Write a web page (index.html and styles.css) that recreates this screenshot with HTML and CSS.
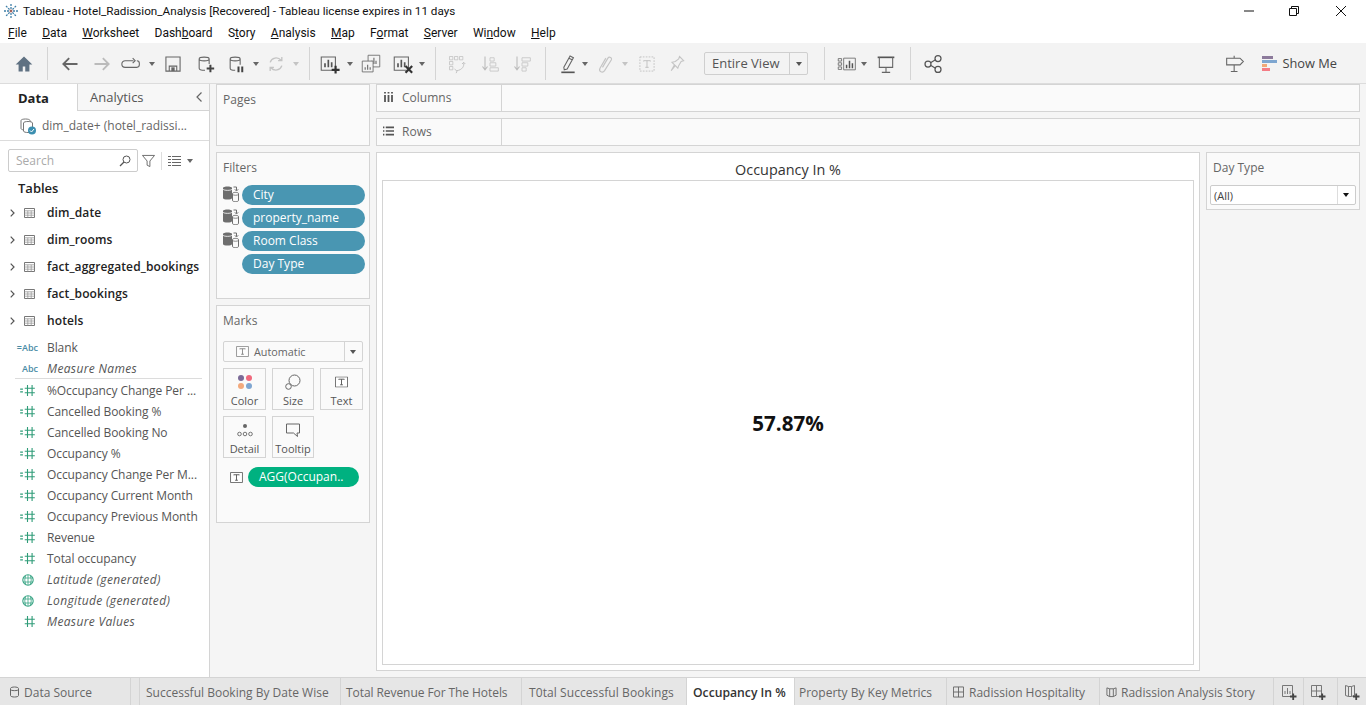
FILE: index.html
```html
<!DOCTYPE html>
<html lang="en">
<head>
  <meta charset="UTF-8">
  <meta name="viewport" content="width=device-width, initial-scale=1.0">
  <title>Tableau - Hotel_Radission_Analysis</title>
  <link rel="stylesheet" href="styles.css">
</head>
<body>
  <svg class="sprite" xmlns="http://www.w3.org/2000/svg">
    <symbol id="hash" viewBox="0 0 16 12">
      <path d="M0 4.500h3M0 7.500h3M5 3.500h11M5 8.500h11M8 0v12M13 0v12" fill="none" stroke="#2f9c78" stroke-width="1.200"/>
    </symbol>
    <symbol id="hash-plain" viewBox="0 0 16 12">
      <path d="M5 3.500h11M5 8.500h11M8 0v12M13 0v12" fill="none" stroke="#2f9c78" stroke-width="1.200"/>
    </symbol>
    <symbol id="globe" viewBox="0 0 12 12">
      <circle cx="6" cy="6" r="5.200" fill="none" stroke="#3aa585" stroke-width="1.100"/>
      <path d="M1 4h10M1 8h10M6 1v10M3.500 2q-1.500 4 0 8M8.500 2q1.500 4 0 8" fill="none" stroke="#3aa585" stroke-width=".8"/>
    </symbol>
    <symbol id="table" viewBox="0 0 11 10">
      <path d="M.5.500h10v9H.5z" fill="#fff" stroke="#777"/>
      <path d="M.5 2.800h10M.5 5h10M.5 7.200h10M3.800 2.800v6.700M7.200 2.800v6.700" stroke="#999" fill="none" stroke-width=".8"/>
    </symbol>
    <symbol id="dblink" viewBox="0 0 16 16">
      <path d="M0 2C0 0 9 0 9 2v10c0 2-9 2-9 0z" fill="#6e6e6e"/>
      <path d="M0 3c0 1.800 9 1.800 9 0" fill="none" stroke="#fff" stroke-width=".8"/>
      <path d="M9.500 7.500c0-1.500 6-1.500 6 0v7c0 1.500-6 1.500-6 0z" fill="#fafafa" stroke="#6e6e6e"/>
      <path d="M9.500 8.500c1 1 5 1 6 0" fill="none" stroke="#6e6e6e" stroke-width=".8"/>
      <path d="M10.500 1h3v3.500M11.800 3.300l1.700 1.700 1.700-1.700" fill="none" stroke="#6e6e6e"/>
    </symbol>
    <symbol id="tbox" viewBox="0 0 14 12">
      <path d="M.5.500h13v11H.5z" fill="#fff" stroke="#666"/>
      <path d="M4 3.500V3h6v.5M7 3v6M5.500 9h3" fill="none" stroke="#555"/>
    </symbol>
    <symbol id="chev" viewBox="0 0 5 8">
      <path d="M.7.700L4 4 .7 7.300" fill="none" stroke="#555" stroke-width="1.200"/>
    </symbol>
  </svg>

  <div class="titlebar">
    <svg class="logo" viewBox="0 0 16 16">
      <path d="M8 1v14M1 8h14M3 3l10 10M13 3L3 13" stroke="#3f7fa8" stroke-width="1.300" stroke-dasharray="2 1"/>
      <path d="M6.500 8h3M8 6.500v3" stroke="#c0553f"/>
    </svg>
    <span class="title-text">Tableau - Hotel_Radission_Analysis [Recovered] - Tableau license expires in 11 days</span>
    <div class="win-controls">
      <svg class="win-min" viewBox="0 0 10 10"><path d="M0 5h10" stroke="#111"/></svg>
      <svg class="win-max" viewBox="0 0 10 10"><path d="M.5 2.500h7v7h-7zM2.500 2.500v-2h7v7h-2" fill="none" stroke="#111"/></svg>
      <svg class="win-close" viewBox="0 0 12 12"><path d="M1 1l10 10M11 1L1 11" stroke="#111"/></svg>
    </div>
  </div>

  <nav class="menubar">
    <span><u>F</u>ile</span>
    <span><u>D</u>ata</span>
    <span><u>W</u>orksheet</span>
    <span>Dash<u>b</u>oard</span>
    <span>S<u>t</u>ory</span>
    <span><u>A</u>nalysis</span>
    <span><u>M</u>ap</span>
    <span>F<u>o</u>rmat</span>
    <span><u>S</u>erver</span>
    <span>Wi<u>n</u>dow</span>
    <span><u>H</u>elp</span>
  </nav>

  <div class="toolbar">
    <svg class="tool" viewBox="0 0 24 24"><path d="M12 3L2 12.500h3.500V21h5v-6h3v6h5v-8.500H22z" fill="#5f7182"/></svg>
    <i class="sep g11"></i>
    <svg class="tool g10" viewBox="0 0 24 24"><path d="M21 12H5M11 5l-7 7 7 7" fill="none" stroke="#666" stroke-width="2.200"/></svg>
    <svg class="tool g8" viewBox="0 0 24 24"><path d="M3 12h16M13 5l7 7-7 7" fill="none" stroke="#bbb" stroke-width="2.200"/></svg>
    <svg class="tool g5" viewBox="0 0 24 24"><path d="M15 8H5a3 3 0 0 0 0 8h14a3 3 0 0 0 3-3v-2a3 3 0 0 0-3-3M14 5l3 3-3 3" fill="none" stroke="#666" stroke-width="1.300"/></svg>
    <i class="caret g2"></i>
    <svg class="tool g2" viewBox="0 0 24 24"><path d="M3.500 3.500h17v17h-17zM7.500 20.500v-6h9v6" fill="none" stroke="#666" stroke-width="1.300"/><path d="M10 16h4v4.500h-4z" fill="#666"/></svg>
    <svg class="tool g8" viewBox="0 0 24 24"><path d="M5 6c0-3 12-3 12 0v6M5 6v11c0 1.500 3 2.500 7 2.500M5 6c0 3 12 3 12 0" fill="none" stroke="#666" stroke-width="1.300"/><path d="M14 17.500h9M18.500 13v9" stroke="#444" stroke-width="2.400"/></svg>
    <svg class="tool g7" viewBox="0 0 24 24"><path d="M5 6c0-3 12-3 12 0v7M5 6v11c0 1.500 3 2.500 6 2.500M5 6c0 3 12 3 12 0" fill="none" stroke="#666" stroke-width="1.300"/><path d="M15 15v7M19.500 15v7" stroke="#444" stroke-width="2.400"/></svg>
    <i class="caret g1"></i>
    <svg class="tool g1" viewBox="0 0 24 24"><path d="M5 10a7.500 7.500 0 0 1 13-2.500M19 14a7.500 7.500 0 0 1-13 2.500M19 3.500V8h-4.500M5 20.500V16h4.500" fill="none" stroke="#c4c4c4" stroke-width="1.600"/></svg>
    <i class="caret g1 off"></i>
    <i class="sep g6"></i>
    <svg class="tool g8" viewBox="0 0 24 24"><path d="M1.500 3.500h17v16h-17z" fill="none" stroke="#666" stroke-width="1.300"/><path d="M6 16v-5M10 16V7M14 16v-6" stroke="#555" stroke-width="2"/><path d="M14 19h9.500M18.700 14v9.500" stroke="#333" stroke-width="2.600"/></svg>
    <i class="caret g1"></i>
    <svg class="tool g2" viewBox="0 0 24 24"><path d="M8.500 1.500h14v14h-14z" fill="#f3f3f3" stroke="#666"/><path d="M13 12V8M15.500 12V4.500M18 12V8" stroke="#666" stroke-width="1.300"/><path d="M1.500 8.500h13v13h-13z" fill="#f3f3f3" stroke="#666"/><path d="M5 19v-3M8 19v-6M11 19v-3" stroke="#666" stroke-width="1.300"/></svg>
    <svg class="tool g8" viewBox="0 0 24 24"><path d="M1.500 3.500h17v16h-17z" fill="none" stroke="#666" stroke-width="1.300"/><path d="M6 16v-5M10 16V7M14 16v-6" stroke="#555" stroke-width="2"/><path d="M15 14.500l8 8M23 14.500l-8 8" stroke="#333" stroke-width="2.600"/></svg>
    <i class="caret"></i>
    <i class="sep g6"></i>
    <svg class="tool g9" viewBox="0 0 24 24"><path d="M3 3h4v4H3zM9 3h4v4H9zM15 3h4v4h-4zM3 9h4v4H3zM3 15h4v4H3z" fill="none" stroke="#c4c4c4"/><path d="M20 10c1 5-2 9-8 10M9 18l3 2.500-1 2.500M18 12l2-2 2 2" fill="none" stroke="#c4c4c4" stroke-width="1.200"/></svg>
    <svg class="tool g9" viewBox="0 0 24 24"><path d="M6 3v15M3 15l3 4 3-4" fill="none" stroke="#bbb" stroke-width="1.300"/><path d="M12 4.500h5v4h-5zM12 10.500h7v4h-7zM12 16.500h10v4H12z" fill="none" stroke="#c4c4c4"/></svg>
    <svg class="tool g8" viewBox="0 0 24 24"><path d="M6 3v15M3 15l3 4 3-4" fill="none" stroke="#bbb" stroke-width="1.300"/><path d="M12 4.500h10v4H12zM12 10.500h7v4h-7zM12 16.500h5v4h-5z" fill="none" stroke="#c4c4c4"/></svg>
    <i class="sep g11"></i>
    <svg class="tool g10" viewBox="0 0 24 24"><path d="M7 16L14.500 2.500l4 2L11 18l-3.500 1zM13 5l4 2" fill="none" stroke="#666" stroke-width="1.300"/><path d="M4 22h16" stroke="#555" stroke-width="2"/></svg>
    <i class="caret gm2"></i>
    <svg class="tool g1" viewBox="0 0 24 24"><path d="M9 16L15.500 5c1.500-2.500 5.500-.5 4 2.200L11.500 20c-2.500 3.500-7.500 1-5.500-3l7-12" fill="none" stroke="#c4c4c4" stroke-width="1.400"/></svg>
    <i class="caret g1 off"></i>
    <svg class="tool g3" viewBox="0 0 24 24"><path d="M3.500 3.500h17v17h-17z" fill="none" stroke="#bbb" stroke-dasharray="2 1.500"/><path d="M8 9V8h8v1M12 8v8M10 16h4" fill="none" stroke="#bbb"/></svg>
    <svg class="tool g6" viewBox="0 0 24 24"><path d="M15 3l5 5-3 1-3 5-1 3-3-3-5 6 4-7-3-3 4-1 4-3z" fill="none" stroke="#c4c4c4" stroke-width="1.300"/></svg>
    <div class="fit-select g15"><span class="fit-label">Entire View</span><span class="fit-arrow"><i class="caret dark"></i></span></div>
    <i class="sep g16"></i>
    <svg class="tool g10" viewBox="0 0 24 24"><path d="M1.500 5.500h4v3h-4zM1.500 10.500h4v3h-4zM1.500 15.500h4v3h-4zM8 5h14v14H8z" fill="none" stroke="#666"/><path d="M11.500 17v-4M15 17V8M18.500 17v-6" stroke="#555" stroke-width="1.800"/></svg>
    <i class="caret gm2"></i>
    <svg class="tool g3" viewBox="0 0 24 24"><path d="M2 4h20" stroke="#555" stroke-width="2"/><path d="M4 4v12h16V4M12 16v6M7 22h10" fill="none" stroke="#666" stroke-width="1.300"/></svg>
    <i class="sep g12"></i>
    <svg class="tool g10" viewBox="0 0 24 24"><circle cx="6" cy="12" r="3.600" fill="none" stroke="#555" stroke-width="1.500"/><circle cx="18" cy="5.500" r="3.600" fill="none" stroke="#555" stroke-width="1.500"/><circle cx="18" cy="18.500" r="3.600" fill="none" stroke="#555" stroke-width="1.500"/><path d="M9 10.500l6-3.500M9 13.500l6 3.500" stroke="#555" stroke-width="1.500"/></svg>
    <div class="toolbar-right">
      <svg class="tool" viewBox="0 0 24 24"><path d="M2 5h16l4 4-4 4H2zM11 5V2M11 13v8M7 21h8" fill="none" stroke="#666" stroke-width="1.300"/></svg>
      <div class="show-me">
        <div class="show-bars"><i class="bar-1"></i><i class="bar-2"></i><i class="bar-3"></i><i class="bar-4"></i></div>
        <span>Show Me</span>
      </div>
    </div>
  </div>

  <div class="main">
    <aside class="sidebar">
      <div class="side-tabs">
        <div class="side-tab active">Data</div>
        <div class="side-tab">Analytics<svg class="collapse" viewBox="0 0 8 12"><path d="M6.500 1.500L2 6l4.500 4.500" fill="none" stroke="#666" stroke-width="1.200"/></svg></div>
      </div>
      <div class="source">
        <svg class="source-icon" viewBox="0 0 18 18">
          <path d="M2 3.500c0-2 9-2 9 0v8c0 2-9 2-9 0z" fill="#fff" stroke="#777"/>
          <path d="M4.500 6c0-2 9-2 9 0v8c0 2-9 2-9 0z" fill="#fff" stroke="#777"/>
          <circle cx="13" cy="13.500" r="4" fill="#3c8fb0"/>
          <path d="M11 13.500l1.500 1.500 2.500-3" fill="none" stroke="#fff"/>
        </svg>
        <span>dim_date+ (hotel_radissi...</span>
      </div>
      <div class="search-row">
        <div class="search"><span>Search</span>
          <svg viewBox="0 0 12 12"><circle cx="7.500" cy="4.500" r="3.500" fill="none" stroke="#555"/><path d="M5 7l-4 4" stroke="#555" stroke-width="1.200"/></svg>
        </div>
        <svg class="funnel" viewBox="0 0 14 14"><path d="M.5 1h13L8.500 7v6l-3-1.500V7z" fill="none" stroke="#666"/></svg>
        <i class="search-sep"></i>
        <svg class="list-icon" viewBox="0 0 13 10"><path d="M0 .5h3M0 3.500h3M0 6.500h3M0 9.500h3M4 .5h9M4 3.500h9M4 6.500h9M4 9.500h9" stroke="#666"/></svg>
        <i class="caret"></i>
      </div>
      <div class="tables-label">Tables</div>
      <ul class="tables">
        <li><svg class="chev"><use href="#chev"/></svg><svg class="table-icon"><use href="#table"/></svg>dim_date</li>
        <li><svg class="chev"><use href="#chev"/></svg><svg class="table-icon"><use href="#table"/></svg>dim_rooms</li>
        <li><svg class="chev"><use href="#chev"/></svg><svg class="table-icon"><use href="#table"/></svg>fact_aggregated_bookings</li>
        <li><svg class="chev"><use href="#chev"/></svg><svg class="table-icon"><use href="#table"/></svg>fact_bookings</li>
        <li><svg class="chev"><use href="#chev"/></svg><svg class="table-icon"><use href="#table"/></svg>hotels</li>
      </ul>
      <ul class="fields dims">
        <li><span class="abc">=Abc</span>Blank</li>
        <li class="gen"><span class="abc">Abc</span>Measure Names</li>
      </ul>
      <ul class="fields">
        <li><span class="field-icon"><svg class="hash"><use href="#hash"/></svg></span>%Occupancy Change Per ...</li>
        <li><span class="field-icon"><svg class="hash"><use href="#hash"/></svg></span>Cancelled Booking %</li>
        <li><span class="field-icon"><svg class="hash"><use href="#hash"/></svg></span>Cancelled Booking No</li>
        <li><span class="field-icon"><svg class="hash"><use href="#hash"/></svg></span>Occupancy %</li>
        <li><span class="field-icon"><svg class="hash"><use href="#hash"/></svg></span>Occupancy Change Per M...</li>
        <li><span class="field-icon"><svg class="hash"><use href="#hash"/></svg></span>Occupancy Current Month</li>
        <li><span class="field-icon"><svg class="hash"><use href="#hash"/></svg></span>Occupancy Previous Month</li>
        <li><span class="field-icon"><svg class="hash"><use href="#hash"/></svg></span>Revenue</li>
        <li><span class="field-icon"><svg class="hash"><use href="#hash"/></svg></span>Total occupancy</li>
        <li class="gen"><span class="field-icon"><svg class="globe"><use href="#globe"/></svg></span>Latitude (generated)</li>
        <li class="gen"><span class="field-icon"><svg class="globe"><use href="#globe"/></svg></span>Longitude (generated)</li>
        <li class="gen"><span class="field-icon"><svg class="hash"><use href="#hash-plain"/></svg></span>Measure Values</li>
      </ul>
    </aside>

    <div class="cards">
      <section class="card pages"><h4>Pages</h4></section>
      <section class="card filters">
        <h4>Filters</h4>
        <div class="filter"><svg class="dblink"><use href="#dblink"/></svg><span class="pill">City</span></div>
        <div class="filter"><svg class="dblink"><use href="#dblink"/></svg><span class="pill">property_name</span></div>
        <div class="filter"><svg class="dblink"><use href="#dblink"/></svg><span class="pill">Room Class</span></div>
        <div class="filter"><span class="pill">Day Type</span></div>
      </section>
      <section class="card marks">
        <h4>Marks</h4>
        <div class="mark-select">
          <div class="mark-type"><svg class="mark-t"><use href="#tbox"/></svg>Automatic</div>
          <div class="mark-arrow"><i class="caret dark"></i></div>
        </div>
        <div class="mark-grid">
          <div class="mark-btn">
            <svg viewBox="0 0 16 16"><circle cx="4" cy="4" r="3" fill="#7b6a97"/><circle cx="12" cy="4" r="3" fill="#f0697d"/><circle cx="4" cy="12" r="3" fill="#f3a97c"/><circle cx="12" cy="12" r="3" fill="#7fa6d1"/></svg>
            <span>Color</span>
          </div>
          <div class="mark-btn">
            <svg viewBox="0 0 16 16"><circle cx="9.500" cy="6.500" r="5.500" fill="none" stroke="#666"/><circle cx="3.500" cy="12.500" r="2.800" fill="#fafafa" stroke="#666"/></svg>
            <span>Size</span>
          </div>
          <div class="mark-btn">
            <svg viewBox="0 0 14 12" class="mark-text-icon"><use href="#tbox"/></svg>
            <span>Text</span>
          </div>
          <div class="mark-btn">
            <svg viewBox="0 0 16 16"><circle cx="8" cy="4" r="2" fill="#666"/><circle cx="2.500" cy="12" r="1.800" fill="none" stroke="#666" stroke-width=".9"/><circle cx="8" cy="12" r="1.800" fill="none" stroke="#666" stroke-width=".9"/><circle cx="13.500" cy="12" r="1.800" fill="none" stroke="#666" stroke-width=".9"/></svg>
            <span>Detail</span>
          </div>
          <div class="mark-btn">
            <svg viewBox="0 0 16 16"><path d="M1.500 2h13v9H12l.5 3.500L8.500 11h-7z" fill="none" stroke="#666"/></svg>
            <span>Tooltip</span>
          </div>
        </div>
        <div class="mark-field"><svg class="mark-t"><use href="#tbox"/></svg><span class="pill green">AGG(Occupan..</span></div>
      </section>
    </div>

    <div class="workspace">
      <div class="shelf"><div class="shelf-label"><svg viewBox="0 0 10 10"><path d="M1.500 0v1.500M5 0v1.500M8.500 0v1.500M1.500 3v7M5 3v7M8.500 3v7" stroke="#555" stroke-width="1.800"/></svg>Columns</div></div>
      <div class="shelf"><div class="shelf-label"><svg viewBox="0 0 12 10"><path d="M0 1h1.500M3 1h9M0 5h1.500M3 5h9M0 9h1.500M3 9h9" stroke="#555" stroke-width="1.800"/></svg>Rows</div></div>
      <div class="canvas">
        <div class="sheet">
          <div class="sheet-title">Occupancy In %</div>
          <div class="view"><span class="kpi">57.87%</span></div>
        </div>
        <div class="legend">
          <h4>Day Type</h4>
          <div class="legend-select"><span>(All)</span><span class="legend-arrow"><i class="caret black"></i></span></div>
        </div>
      </div>
    </div>
  </div>

  <div class="tabbar">
    <div class="tab source-tab"><svg viewBox="0 0 10 12"><path d="M1 2.500c0-2 8-2 8 0v7c0 2-8 2-8 0zM1 3.500c0 1.500 8 1.500 8 0" fill="none" stroke="#666"/></svg>Data Source</div>
    <div class="tab-gap"></div>
    <div class="tab t1">Successful Booking By Date Wise</div>
    <div class="tab t2">Total Revenue For The Hotels</div>
    <div class="tab t3">T0tal Successful Bookings</div>
    <div class="tab t4 active">Occupancy In %</div>
    <div class="tab t5">Property By Key Metrics</div>
    <div class="tab t6"><svg viewBox="0 0 12 12"><path d="M.5.500h11v11H.5zM6 .5v11M.5 6h11" fill="none" stroke="#666"/></svg>Radission Hospitality</div>
    <div class="tab t7"><svg viewBox="0 0 12 12"><path d="M1 1.500l3 1h4l3-1v8l-3 1.500H4L1 9.500zM4 2.500V11M8 2.500V11" fill="none" stroke="#666"/></svg>Radission Analysis Story</div>
    <div class="tab add"><svg viewBox="0 0 16 16"><path d="M1.500 1.500h10v11h-10z" fill="none" stroke="#777"/><path d="M4 10V7M6.500 10V4M9 10V7" stroke="#777"/><path d="M9 12.500h6.500M12.200 9.500v6.500" stroke="#444" stroke-width="1.800"/></svg></div>
    <div class="tab add mid"><svg viewBox="0 0 16 16"><path d="M1.500 1.500h10v11h-10zM6.500 1.500v11M1.500 7h10" fill="none" stroke="#777"/><path d="M9 12.500h6.500M12.200 9.500v6.500" stroke="#444" stroke-width="1.800"/></svg></div>
    <div class="tab add end"><svg viewBox="0 0 16 16"><path d="M1.500 1.500l3 1h3l3-1v10l-3 1h-3l-3-1zM4.500 2.500v10M7.500 2.500v10" fill="none" stroke="#777"/><path d="M9 12.500h6.500M12.200 9.500v6.500" stroke="#444" stroke-width="1.800"/></svg></div>
  </div>
</body>
</html>
```

FILE: styles.css
```css
* {
  box-sizing: border-box;
}
html, body {
  height: 100%;
}
body {
  margin: 0;
  height: 705px;
  overflow: hidden;
  display: flex;
  flex-direction: column;
  background: #f5f5f5;
  color: #555;
  font-family: "Open Sans", "Noto Sans", sans-serif;
  font-size: 12px;
}
ul {
  list-style: none;
  margin: 0;
  padding: 0;
}
h4 {
  margin: 0;
  font-weight: 400;
  font-size: 12px;
  color: #666;
}
.sprite {
  display: none;
}

/* title + menu */
.titlebar {
  height: 22px;
  flex: none;
  display: flex;
  align-items: center;
  background: #fff;
  color: #111;
  padding-left: 3px;
}
.logo {
  width: 16px;
  height: 16px;
  margin-right: 4px;
}
.title-text {
  font-family: Roboto, sans-serif;
  font-size: 11.700px;
}
.win-controls {
  margin-left: auto;
  display: flex;
  align-items: center;
}
.win-min {
  width: 10px;
  height: 10px;
  margin-right: 35px;
}
.win-max {
  width: 10px;
  height: 10px;
  margin-right: 36px;
}
.win-close {
  width: 12px;
  height: 12px;
  margin-right: 19px;
}
.menubar {
  height: 21px;
  flex: none;
  display: flex;
  align-items: center;
  gap: 15.300px;
  padding-left: 8px;
  background: #fff;
  color: #111;
  font-family: Roboto, sans-serif;
  font-size: 12px;
}

/* toolbar */
.toolbar {
  height: 41px;
  flex: none;
  display: flex;
  align-items: center;
  padding: 1px 0 0 12px;
  background: #f3f3f3;
  border-bottom: 1px solid #dcdcdc;
}
.tool {
  width: 24px;
  height: 24px;
  padding: 2px;
  flex: none;
}
.sep {
  width: 1px;
  height: 33px;
  background: #d4d4d4;
  flex: none;
}
.caret {
  width: 14px;
  height: 4px;
  flex: none;
  position: relative;
  display: block;
}
.caret::after {
  content: "";
  position: absolute;
  left: 4px;
  top: 0;
  border-left: 3px solid transparent;
  border-right: 3px solid transparent;
  border-top: 4px solid #666;
}
.caret.off::after {
  border-top-color: #c4c4c4;
}
.caret.dark::after {
  border-top-color: #555;
}
.caret.black::after {
  border-top-color: #111;
}
.gm2 { margin-left: -2px; }
.g1 { margin-left: 1px; }
.g2 { margin-left: 2px; }
.g3 { margin-left: 3px; }
.g5 { margin-left: 5px; }
.g6 { margin-left: 6px; }
.g7 { margin-left: 7px; }
.g8 { margin-left: 8px; }
.g9 { margin-left: 9px; }
.g10 { margin-left: 10px; }
.g11 { margin-left: 11px; }
.g12 { margin-left: 12px; }
.g15 { margin-left: 15px; }
.g16 { margin-left: 16px; }
.fit-select {
  width: 104px;
  height: 23px;
  display: flex;
  align-items: center;
  border: 1px solid #cfcfcf;
  border-radius: 2px;
  font-size: 13px;
  color: #555;
}
.fit-label {
  flex: 1;
  padding: 0 0 2px 7px;
}
.fit-arrow {
  width: 18px;
  height: 100%;
  display: flex;
  align-items: center;
  border-left: 1px solid #cfcfcf;
  padding-left: 2px;
}
.toolbar-right {
  margin-left: auto;
  display: flex;
  align-items: center;
  padding-right: 29px;
}
.show-me {
  display: flex;
  align-items: center;
  gap: 6px;
  margin-left: 15px;
  font-size: 12.800px;
  color: #444;
}
.show-me span {
  padding-bottom: 2px;
}
.show-bars {
  width: 15px;
  display: flex;
  flex-direction: column;
  gap: 1px;
}
.show-bars i {
  height: 3px;
  display: block;
}
.bar-1 { width: 11px; background: #8c7a9b; }
.bar-2 { width: 15px; background: #7ea6d0; }
.bar-3 { width: 5px; background: #f0a878; }
.bar-4 { width: 8px; background: #f47c85; }

/* main area */
.main {
  flex: 1;
  min-height: 0;
  display: flex;
}
.sidebar {
  width: 210px;
  flex: none;
  background: #fff;
  border-right: 1px solid #d4d4d4;
}
.side-tabs {
  height: 27px;
  display: flex;
}
.side-tab {
  display: flex;
  align-items: center;
  flex: 1;
  padding-left: 12px;
  font-size: 13px;
  color: #555;
  background: #f7f7f7;
  border-left: 1px solid #d4d4d4;
  border-bottom: 1px solid #d4d4d4;
}
.side-tab.active {
  flex: none;
  width: 77px;
  padding-left: 18px;
  font-weight: 700;
  color: #222;
  background: #fff;
  border: 0;
}
.collapse {
  width: 8px;
  height: 12px;
  margin-left: auto;
  margin-right: 6px;
}
.source {
  height: 30px;
  display: flex;
  align-items: center;
  padding-left: 19px;
  border-bottom: 1px solid #dcdcdc;
  color: #666;
}
.source-icon {
  width: 18px;
  height: 18px;
  margin-right: 5px;
}
.search-row {
  display: flex;
  align-items: center;
  margin-top: 8px;
  padding-left: 8px;
}
.search {
  width: 130px;
  height: 23px;
  display: flex;
  align-items: center;
  justify-content: space-between;
  padding: 0 6px 0 7px;
  border: 1px solid #ccc;
  border-radius: 2px;
  color: #aaa;
}
.search svg {
  width: 12px;
  height: 12px;
}
.funnel {
  width: 13px;
  height: 14px;
  margin-left: 4px;
}
.search-sep {
  width: 1px;
  height: 18px;
  margin-left: 6px;
  background: #ddd;
}
.list-icon {
  width: 13px;
  height: 10px;
  margin-left: 6px;
}
.search-row .caret {
  margin-left: 2px;
}
.tables-label {
  height: 20px;
  line-height: 20px;
  margin-top: 6px;
  padding-left: 18px;
  font-size: 13px;
  font-weight: 600;
  color: #222;
}
.tables {
  margin-top: 1px;
}
.tables li {
  height: 27px;
  display: flex;
  align-items: center;
  padding-left: 10px;
  font-weight: 600;
  letter-spacing: .1px;
  color: #222;
}
.chev {
  width: 5px;
  height: 8px;
  margin-right: 9px;
}
.table-icon {
  width: 11px;
  height: 10px;
  margin-right: 12px;
}
.dims {
  margin-top: 3px;
}
.dims li:last-child {
  border-bottom: 1px solid #dcdcdc;
}
.fields {
  margin-left: 15px;
  margin-right: 7px;
}
.fields li {
  height: 21px;
  display: flex;
  align-items: center;
  white-space: nowrap;
  letter-spacing: -.08px;
  color: #555;
}
.fields li.gen {
  font-style: italic;
  letter-spacing: .35px;
}
.dims + .fields {
  margin-top: 1px;
}
.field-icon {
  width: 32px;
  flex: none;
  display: flex;
  align-items: center;
  padding-left: 5px;
}
.abc {
  width: 32px;
  flex: none;
  font-size: 9px;
  font-style: normal;
  font-weight: 600;
  letter-spacing: 0;
  color: #4b8ca6;
  text-align: right;
  padding-right: 9px;
}
.hash {
  width: 15px;
  height: 11px;
}
.globe {
  width: 12px;
  height: 12px;
  margin-left: 2px;
}

/* pages / filters / marks */
.cards {
  width: 154px;
  flex: none;
  margin-left: 6px;
  display: flex;
  flex-direction: column;
  gap: 6px;
}
.card {
  background: #fafafa;
  border: 1px solid #d4d4d4;
  padding: 6px 4px 6px 6px;
}
.pages {
  height: 62px;
}
.filters {
  height: 147px;
}
.filter {
  height: 23px;
  display: flex;
  align-items: center;
  padding-left: 19px;
  position: relative;
}
.filters h4 {
  margin-bottom: 7px;
}
.dblink {
  position: absolute;
  left: 0;
  top: 3px;
  width: 16px;
  height: 16px;
}
.pill {
  flex: 1;
  height: 20px;
  line-height: 19px;
  padding-left: 11px;
  border-radius: 10px;
  background: #4996b2;
  color: #fff;
  white-space: nowrap;
}
.pill.green {
  background: #00b180;
}
.marks {
  height: 218px;
  padding-top: 7px;
  padding-right: 6px;
}
.mark-select {
  height: 21px;
  margin-top: 12px;
  display: flex;
  border: 1px solid #d4d4d4;
  border-radius: 2px;
  color: #666;
  font-size: 10.800px;
}
.marks h4 {
  margin-top: -1px;
}
.mark-type {
  flex: 1;
  display: flex;
  align-items: center;
  padding-left: 12px;
}
.mark-type .mark-t {
  margin-right: 5px;
  opacity: .7;
}
.mark-arrow {
  width: 18px;
  display: flex;
  align-items: center;
  border-left: 1px solid #d4d4d4;
  padding-left: 1px;
}
.mark-t {
  width: 13px;
  height: 11px;
  flex: none;
}
.mark-grid {
  display: grid;
  grid-template-columns: 43px 42px 43px;
  grid-auto-rows: 42px;
  column-gap: 6px;
  row-gap: 6px;
  margin-top: 6px;
}
.mark-btn {
  display: flex;
  flex-direction: column;
  align-items: center;
  justify-content: space-between;
  padding: 5px 0 1px;
  border: 1px solid #d4d4d4;
  font-size: 11px;
  color: #555;
}
.mark-btn svg {
  width: 16px;
  height: 16px;
}
.mark-btn .mark-text-icon {
  width: 13px;
  height: 12px;
  margin-top: 2px;
}
.mark-field {
  display: flex;
  align-items: center;
  margin-top: 9px;
  padding-left: 7px;
}
.mark-field .mark-t {
  margin-right: 5px;
}
.mark-field .pill {
  flex: none;
  width: 111px;
}

/* shelves + view */
.workspace {
  width: 984px;
  flex: none;
  margin-left: 6px;
  display: flex;
  flex-direction: column;
}
.shelf {
  height: 28px;
  margin-bottom: 6px;
  background: #fafafa;
  border: 1px solid #d4d4d4;
}
.shelf-label {
  width: 125px;
  height: 100%;
  display: flex;
  align-items: center;
  gap: 8px;
  padding: 0 0 2px 6px;
  border-right: 1px solid #d4d4d4;
  color: #666;
}
.shelf-label svg {
  width: 11px;
  height: 10px;
}
.canvas {
  flex: 1;
  display: flex;
  gap: 6px;
  align-items: flex-start;
}
.sheet {
  width: 824px;
  height: 519px;
  display: flex;
  flex-direction: column;
  padding: 0 5px 5px;
  background: #fff;
  border: 1px solid #d4d4d4;
}
.sheet-title {
  height: 27px;
  line-height: 33px;
  text-align: center;
  font-size: 14.400px;
  color: #333;
}
.view {
  flex: 1;
  display: flex;
  align-items: center;
  justify-content: center;
  padding-top: 1px;
  border: 1px solid #d4d4d4;
}
.kpi {
  font-size: 20.600px;
  font-weight: 700;
  color: #111;
}
.legend {
  width: 154px;
  height: 58px;
  padding: 6px 3px 0;
  background: #fafafa;
  border: 1px solid #d4d4d4;
}
.legend h4 {
  padding-left: 3px;
  margin-bottom: 9px;
}
.legend-select {
  height: 20px;
  display: flex;
  align-items: center;
  justify-content: space-between;
  padding-left: 3px;
  background: #fff;
  border: 1px solid #ccc;
  border-radius: 2px;
  font-size: 11px;
  color: #444;
}
.legend-arrow {
  width: 18px;
  height: 100%;
  display: flex;
  align-items: center;
  border-left: 1px solid #ddd;
  padding-left: 1px;
}

/* sheet tabs */
.tabbar {
  height: 28px;
  flex: none;
  display: flex;
  background: #e6e6e6;
  border-top: 1px solid #d4d4d4;
}
.tab {
  flex: none;
  display: flex;
  align-items: center;
  gap: 5px;
  padding-left: 5px;
  padding-top: 2px;
  border-right: 1px solid #d4d4d4;
  color: #666;
  white-space: nowrap;
}
.tab svg {
  width: 11px;
  height: 12px;
  margin-top: -2px;
}
.tab.active {
  background: #fff;
  font-weight: 600;
  font-size: 12.200px;
  color: #333;
}
.source-tab { width: 131px; padding-left: 9px; gap: 4px; }
.tab-gap { width: 9px; flex: none; border-right: 1px solid #d4d4d4; }
.t1 { width: 201px; padding-left: 6px; }
.t2 { width: 181px; letter-spacing: -.07px; }
.t3 { width: 165px; padding-left: 7px; letter-spacing: .08px; }
.t4 { width: 108px; padding-left: 6px; }
.t5 { width: 152px; padding-left: 4px; }
.t6 { width: 153px; padding-left: 6px; }
.t7 { width: 174px; padding-left: 6px; gap: 4px; }
.add { justify-content: center; padding: 0; gap: 0; width: 30px; }
.add svg { width: 16px; height: 16px; margin-top: 0; }
.add.mid { width: 34px; padding-right: 6px; }
.add.end { width: 28px; border-right: 0; }
```
